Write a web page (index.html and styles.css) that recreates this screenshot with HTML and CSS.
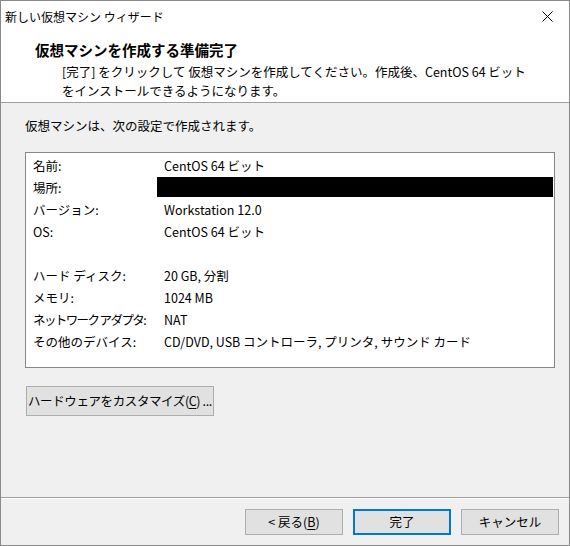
FILE: index.html
```html
<!DOCTYPE html>
<html lang="ja">
<head>
<meta charset="utf-8">
<title>新しい仮想マシン ウィザード</title>
<link rel="stylesheet" href="styles.css">
</head>
<body>
<div class="window">
  <div class="titlebar">
    <span class="title">新しい仮想マシン ウィザード</span>
    <svg class="close" width="11" height="11" viewBox="0 0 11 11"><path d="M0.5 0.5 L10.5 10.5 M10.5 0.5 L0.5 10.5" stroke="#000" stroke-width="1" fill="none"/></svg>
  </div>
  <div class="header">
    <div class="heading">仮想マシンを作成する準備完了</div>
    <div class="subtitle">[完了] をクリックして 仮想マシンを作成してください。作成後、CentOS 64 ビット<br>をインストールできるようになります。</div>
  </div>
  <div class="content">
    <div class="intro">仮想マシンは、次の設定で作成されます。</div>
    <div class="listbox">
      <div class="row"><span class="label">名前:</span><span class="value">CentOS 64 ビット</span></div>
      <div class="row"><span class="label">場所:</span><span class="value redacted"></span></div>
      <div class="row"><span class="label">バージョン:</span><span class="value">Workstation 12.0</span></div>
      <div class="row"><span class="label">OS:</span><span class="value">CentOS 64 ビット</span></div>
      <div class="row"><span class="label"></span><span class="value"></span></div>
      <div class="row"><span class="label">ハード ディスク:</span><span class="value">20 GB, 分割</span></div>
      <div class="row"><span class="label">メモリ:</span><span class="value">1024 MB</span></div>
      <div class="row"><span class="label narrow">ネットワーク アダプタ:</span><span class="value">NAT</span></div>
      <div class="row"><span class="label">その他のデバイス:</span><span class="value">CD/DVD, USB コントローラ, プリンタ, サウンド カード</span></div>
    </div>
    <div class="custom-wrap">
      <button class="btn custom">ハードウェアをカスタマイズ(<u>C</u>) ...</button>
    </div>
  </div>
  <div class="footer">
    <button class="btn">&lt; 戻る(<u>B</u>)</button>
    <button class="btn default">完了</button>
    <button class="btn">キャンセル</button>
  </div>
</div>
</body>
</html>
```

FILE: styles.css
```css
html, body {
  margin: 0;
  padding: 0;
  background: #ffffff;
}

body {
  font-family: "Noto Sans CJK JP", "Noto Sans", sans-serif;
  font-size: 12px;
  color: #000;
}

.window {
  width: 570px;
  height: 546px;
  box-sizing: border-box;
  border: 1px solid #8a8a8a;
  display: flex;
  flex-direction: column;
  background: #f0f0f0;
  overflow: hidden;
}

.titlebar {
  height: 31px;
  background: #fff;
  display: flex;
  align-items: center;
  justify-content: space-between;
  padding: 0 16px 0 4px;
  flex: none;
}

.title {
  font-size: 12px;
  line-height: 16px;
}

.close {
  display: block;
}

.header {
  background: #fff;
  height: 71px;
  box-sizing: border-box;
  border-bottom: 1px solid #a0a0a0;
  padding: 8px 0 0 34px;
  flex: none;
}

.heading {
  font-weight: bold;
  font-size: 14.5px;
  line-height: 20px;
}

.subtitle {
  padding-left: 27px;
  margin-top: 2px;
  font-size: 12.5px;
  line-height: 19px;
}

.content {
  flex: 1;
  padding: 0 14px 0 24px;
  display: flex;
  flex-direction: column;
}

.intro {
  margin-top: 14px;
  font-size: 12.5px;
  line-height: 18px;
}

.listbox {
  margin-top: 17px;
  width: 530px;
  height: 216px;
  box-sizing: border-box;
  border: 1px solid #828790;
  background: #fff;
  padding: 1px 1px 0 0;
}

.row {
  display: grid;
  grid-template-columns: 131px 1fr;
  height: 22px;
  align-items: center;
  font-size: 12.5px;
}

.label {
  padding-left: 7px;
  white-space: nowrap;
}

.narrow {
  letter-spacing: -1.6px;
}

.value {
  padding-left: 7px;
  white-space: nowrap;
}

.redacted {
  background: #000;
  height: 20px;
}

.custom-wrap {
  margin-top: 18px;
  display: flex;
}

.btn {
  font-family: "Noto Sans CJK JP", "Noto Sans", sans-serif;
  font-size: 12.5px;
  color: #000;
  background: #e1e1e1;
  border: 1px solid #adadad;
  width: 98px;
  height: 26px;
  padding: 0;
  margin: 0;
  line-height: 20px;
}

.btn u {
  text-underline-offset: 2px;
}

.custom {
  width: 188px;
  height: 30px;
  margin-left: 1px;
  text-align: left;
  padding-left: 1px;
  white-space: nowrap;
  letter-spacing: -0.4px;
}

.default {
  border: 2px solid #0078d7;
}

.footer {
  flex: none;
  height: 48px;
  box-sizing: border-box;
  border-top: 1px solid #a0a0a0;
  box-shadow: inset 0 1px 0 #fff;
  display: flex;
  justify-content: flex-end;
  align-items: flex-start;
  gap: 10px;
  padding: 11px 10px 0 0;
}
```
